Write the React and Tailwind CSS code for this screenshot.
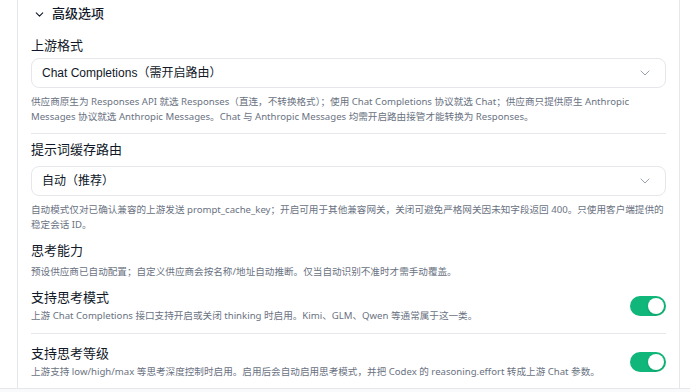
import { ChevronDown } from 'lucide-react'

const hint = 'text-[9.6px] leading-[15px] text-gray-500 [font-family:"Noto_Sans","Noto_Sans_CJK_SC",sans-serif]'

function Select({ value }) {
  return (
    <div className="flex h-[30px] items-center justify-between rounded-lg border border-gray-200 bg-white pl-[10px] pr-[12px] text-[12px] text-gray-900">
      <span>{value}</span>
      <ChevronDown className="h-4 w-4 text-gray-400" strokeWidth={1.5} />
    </div>
  )
}

function Toggle() {
  return (
    <div className="flex h-5 w-9 shrink-0 items-center justify-end rounded-full bg-[#10b67a] p-[2px]">
      <div className="h-4 w-4 rounded-full bg-white shadow" />
    </div>
  )
}

function ToggleRow({ title, desc }) {
  return (
    <div className="flex items-center justify-between gap-4">
      <div className="min-w-0 flex-1">
        <div className="text-[13px] leading-[19px] text-gray-900">{title}</div>
        <div className={`mt-[1px] ${hint}`}>{desc}</div>
      </div>
      <Toggle />
    </div>
  )
}

export default function App() {
  return (
    <div
      className="flex h-[392px] w-[690px] flex-col overflow-hidden bg-white"
      style={{ fontFamily: '"Liberation Sans", "Noto Sans CJK SC", sans-serif' }}
    >
      <div className="ml-[17px] h-[388px] w-[663px] shrink-0 border-x border-gray-200 px-[13px]">
        <div className="flex h-[28px] items-center gap-[6px] pl-[2px] text-[13px] font-medium text-gray-900">
          <ChevronDown className="h-[13px] w-[13px]" strokeWidth={2} />
          <span>高级选项</span>
        </div>

        <div className="mt-[8px] text-[13px] leading-[20px] text-gray-900">上游格式</div>
        <div className="mt-[2px]">
          <Select value="Chat Completions（需开启路由）" />
        </div>
        <p className={`mt-[6px] ${hint}`}>
          供应商原生为 Responses API 就选 Responses（直连，不转换格式）；使用 Chat Completions 协议就选 Chat；供应商只提供原生 Anthropic Messages 协议就选 Anthropic Messages。Chat 与 Anthropic Messages 均需开启路由接管才能转换为 Responses。
        </p>

        <div className="mt-[9px] border-t border-gray-200" />

        <div className="mt-[6px] text-[13px] leading-[20px] text-gray-900">提示词缓存路由</div>
        <div className="mt-[6px]">
          <Select value="自动（推荐）" />
        </div>
        <p className={`mt-[6px] ${hint}`}>
          自动模式仅对已确认兼容的上游发送 prompt_cache_key；开启可用于其他兼容网关，关闭可避免严格网关因未知字段返回 400。只使用客户端提供的稳定会话 ID。
        </p>

        <div className="mt-[9px] text-[13px] leading-[20px] text-gray-900">思考能力</div>
        <p className={`mt-[3px] ${hint}`}>
          预设供应商已自动配置；自定义供应商会按名称/地址自动推断。仅当自动识别不准时才需手动覆盖。
        </p>

        <div className="mt-[9px]">
          <ToggleRow
            title="支持思考模式"
            desc="上游 Chat Completions 接口支持开启或关闭 thinking 时启用。Kimi、GLM、Qwen 等通常属于这一类。"
          />
        </div>

        <div className="mt-[10px] border-t border-gray-200" />

        <div className="mt-[10px]">
          <ToggleRow
            title="支持思考等级"
            desc="上游支持 low/high/max 等思考深度控制时启用。启用后会自动启用思考模式，并把 Codex 的 reasoning.effort 转成上游 Chat 参数。"
          />
        </div>
      </div>
      <div className="flex-1 border-t border-gray-200 bg-gray-50" />
    </div>
  )
}
